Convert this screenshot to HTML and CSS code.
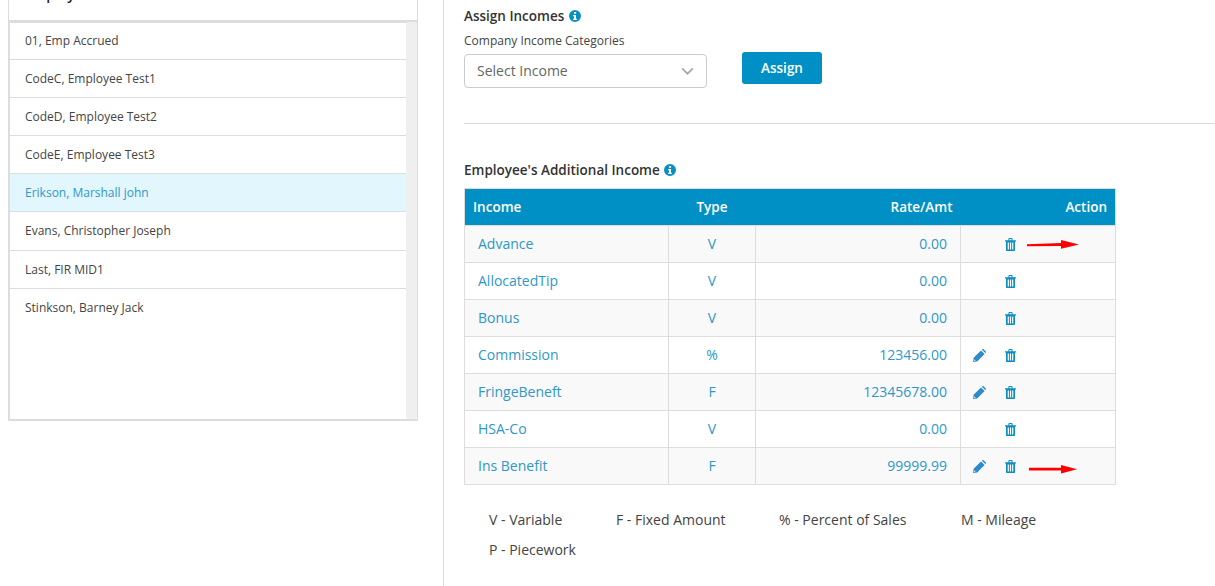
FILE: index.html
```html
<!DOCTYPE html>
<html lang="en">
<head>
<meta charset="utf-8">
<title>Assign Incomes</title>
<link rel="stylesheet" href="styles.css">
</head>
<body>
<svg width="0" height="0" class="defs">
  <symbol id="trash" viewBox="0 0 11 13">
    <path fill="#0a8fc4" fill-rule="evenodd" d="M3.400 2.200V1.200C3.400.5 3.900 0 4.600 0h1.800c.7 0 1.200.5 1.200 1.200V2.200H11v1.300h-1V12c0 .6-.4 1-1 1H2c-.6 0-1-.4-1-1V3.500H0V2.200zM4.500 2.200h2V1.100h-2zM2.700 4.600V11.400h1.200V4.600zM4.900 4.600V11.400h1.200V4.600zM7.100 4.600V11.400h1.200V4.600z"/>
  </symbol>
  <symbol id="pencil" viewBox="0 0 13 13">
    <path fill="#2e8bc9" d="M0 13l.6-4.200L8 1.400l3.600 3.600-7.400 7.400zM8.900 .8L9.500.2c.3-.3.700-.3 1 0l2.300 2.300c.3.300.3.700 0 1l-.6.600z"/>
    <path fill="#dff0fa" d="M1 10.200l1.800 1.800-1 .3-1.100-1.100z"/>
  </symbol>
  <symbol id="info" viewBox="0 0 12 12">
    <path fill="#0a8fc4" fill-rule="evenodd" d="M6 0a6 6 0 1 1 0 12A6 6 0 0 1 6 0zM5 1.900v1.800h2.100V1.900zM4.200 5v1.200H5v2.600h-.8V10h3.600V8.800H7V5z"/>
  </symbol>
</svg>
<div class="page">
  <aside class="left">
    <div class="panel">
      <div class="panel-title">Employees</div>
      <div class="list-wrap">
        <ul class="list">
          <li>01, Emp Accrued</li>
          <li>CodeC, Employee Test1</li>
          <li>CodeD, Employee Test2</li>
          <li>CodeE, Employee Test3</li>
          <li class="active">Erikson, Marshall john</li>
          <li>Evans, Christopher Joseph</li>
          <li>Last, FIR MID1</li>
          <li>Stinkson, Barney Jack</li>
        </ul>
        <div class="scroll"></div>
      </div>
    </div>
  </aside>
  <main class="right">
    <h2 class="title first">Assign Incomes <svg class="ic-info"><use href="#info"/></svg></h2>
    <label class="field-label">Company Income Categories</label>
    <div class="assign-row">
      <div class="select">
        <span>Select Income</span>
        <svg class="chev" viewBox="0 0 12 7"><path d="M1 1l5 5 5-5" fill="none" stroke="#a8a8a8" stroke-width="1.600"/></svg>
      </div>
      <button class="btn">Assign</button>
    </div>
    <hr class="rule">
    <h2 class="title second">Employee's Additional Income <svg class="ic-info"><use href="#info"/></svg></h2>
    <table class="grid">
      <colgroup><col class="c1"><col class="c2"><col class="c3"><col class="c4"></colgroup>
      <thead>
        <tr><th class="l">Income</th><th>Type</th><th class="r">Rate/Amt</th><th class="r act-h">Action</th></tr>
      </thead>
      <tbody>
        <tr><td>Advance</td><td class="c">V</td><td class="r">0.00</td><td class="act"><span class="slot"></span><svg class="ic-trash"><use href="#trash"/></svg>
          <svg class="arrow a1" viewBox="0 0 52 10"><path fill="#f00" d="M0 4.200L34 3V0l18 4.600-18 4.200V6L0 6.200z"/></svg></td></tr>
        <tr><td>AllocatedTip</td><td class="c">V</td><td class="r">0.00</td><td class="act"><span class="slot"></span><svg class="ic-trash"><use href="#trash"/></svg></td></tr>
        <tr><td>Bonus</td><td class="c">V</td><td class="r">0.00</td><td class="act"><span class="slot"></span><svg class="ic-trash"><use href="#trash"/></svg></td></tr>
        <tr><td>Commission</td><td class="c">%</td><td class="r">123456.00</td><td class="act"><span class="slot"><svg class="ic-pencil"><use href="#pencil"/></svg></span><svg class="ic-trash"><use href="#trash"/></svg></td></tr>
        <tr><td>FringeBeneft</td><td class="c">F</td><td class="r">12345678.00</td><td class="act"><span class="slot"><svg class="ic-pencil"><use href="#pencil"/></svg></span><svg class="ic-trash"><use href="#trash"/></svg></td></tr>
        <tr><td>HSA-Co</td><td class="c">V</td><td class="r">0.00</td><td class="act"><span class="slot"></span><svg class="ic-trash"><use href="#trash"/></svg></td></tr>
        <tr><td>Ins Benefit</td><td class="c">F</td><td class="r">99999.99</td><td class="act"><span class="slot"><svg class="ic-pencil"><use href="#pencil"/></svg></span><svg class="ic-trash"><use href="#trash"/></svg>
          <svg class="arrow a2" viewBox="0 0 48 9"><path fill="#f00" d="M0 2.800H32V0l16 4.300L32 8.600V5.600H0z"/></svg></td></tr>
      </tbody>
    </table>
    <div class="legend">
      <span class="k1">V - Variable</span><span class="k2">F - Fixed Amount</span><span class="k3">% - Percent of Sales</span><span class="k4">M - Mileage</span><span class="k1">P - Piecework</span>
    </div>
  </main>
</div>
</body>
</html>
```
FILE: styles.css
```css
* { box-sizing: border-box; }
html, body { margin: 0; height: 586px; overflow: hidden; background: #fff; }
body { font-family: "Open Sans", "Liberation Sans", sans-serif; font-size: 12px; color: #333; }
.defs { position: absolute; }
.page { display: flex; height: 586px; }

.left { width: 444px; flex: none; border-right: 1px solid #ddd; padding-left: 8px; }
.panel { width: 410px; margin-top: -20px; border: 1px solid #ddd; border-top: 0; }
.panel-title { height: 43px; padding: 5px 16px 0; font-size: 14px; font-weight: 600; color: #222; border-bottom: 3px solid #ddd; }
.list-wrap { display: flex; height: 399px; border-left: 1px solid #ddd; border-bottom: 2px solid #ddd; border-right: 1px solid #ddd; margin: -1px -1px -1px 0; }
.list { flex: 1; margin: 0; padding: 0; list-style: none; }
.list li { height: 38px; padding: 11px 15px 0; line-height: 16px; border-bottom: 1px solid #ddd; color: #444; }
.list li:nth-child(6) { height: 39px; }
.list li:last-child { border-bottom: 0; }
.list li.active { background: #e2f6fe; color: #2f97c9; }
.scroll { width: 11px; background: #efefef; border-radius: 3px; }

.right { flex: 1; min-width: 0; padding-left: 20px; }
.title { margin: 0; font-size: 13.5px; font-weight: 600; line-height: 20px; color: #333; display: flex; align-items: center; gap: 4px; }
.title.first { margin-top: 6px; gap: 5px; }
.title.second { margin-top: 36px; }
.ic-info { width: 12px; height: 12px; }
.field-label { display: block; margin-top: 6px; line-height: 18px; font-size: 12px; color: #444; }
.assign-row { display: flex; align-items: flex-start; margin-top: 4px; }
.select { width: 243px; height: 34px; border: 1px solid #ccc; border-radius: 4px; display: flex; align-items: center; justify-content: space-between; padding: 0 12px 2px; font-size: 14px; color: #666; }
.chev { width: 13px; height: 8px; margin-top: 2px; }
.btn { width: 80px; height: 32px; margin: -2px 0 0 35px; border: 0; border-radius: 3px; background: #0090c6; color: #fff; font: 600 13.5px "Open Sans", sans-serif; padding: 0 0 1px; }
.rule { margin: 35px 0 0; border: 0; border-top: 1px solid #ddd; }

.grid { width: 652px; margin-top: 8px; border-collapse: collapse; table-layout: fixed; font-size: 14px; }
.c1 { width: 204px; } .c2 { width: 87px; } .c3 { width: 205px; } .c4 { width: 155px; }
.grid th { height: 37px; padding: 0 8px; background: #0090c6; color: #fff; font-size: 13.5px; font-weight: 600; border: 1px solid #ddd; border-width: 1px 0; text-align: center; line-height: 20px; }
.grid th:first-child { border-left: 1px solid #ddd; }
.grid th:last-child { border-right: 1px solid #ddd; }
.grid th.l { text-align: left; }
.grid th.r { text-align: right; }
.grid td { height: 37px; padding: 0 8px 0 13px; border: 1px solid #ddd; color: #2f97c9; line-height: 20px; position: relative; }
.grid td.c { text-align: center; padding: 0; }
.grid td.r { text-align: right; padding: 0 13px 0 8px; }
.grid tbody tr:nth-child(odd) td { background: #f9f9f9; }
.act { white-space: nowrap; }
.slot { display: inline-block; width: 31px; height: 13px; vertical-align: middle; position: relative; top: -1px; }
.ic-pencil { width: 13px; height: 13px; display: block; margin-left: -1px; }
.ic-trash { width: 11px; height: 13px; vertical-align: middle; position: relative; top: -1px; }
.arrow { position: absolute; }
.a1 { left: 66px; top: 14px; width: 52px; height: 10px; }
.a2 { left: 68px; top: 17px; width: 48px; height: 9px; }

.legend { display: flex; flex-wrap: wrap; width: 652px; margin-top: 20px; padding-left: 25px; font-size: 14px; line-height: 30px; color: #444; }
.k1 { width: 127px; } .k2 { width: 163px; } .k3 { width: 182px; } .k4 { width: 120px; }
```
